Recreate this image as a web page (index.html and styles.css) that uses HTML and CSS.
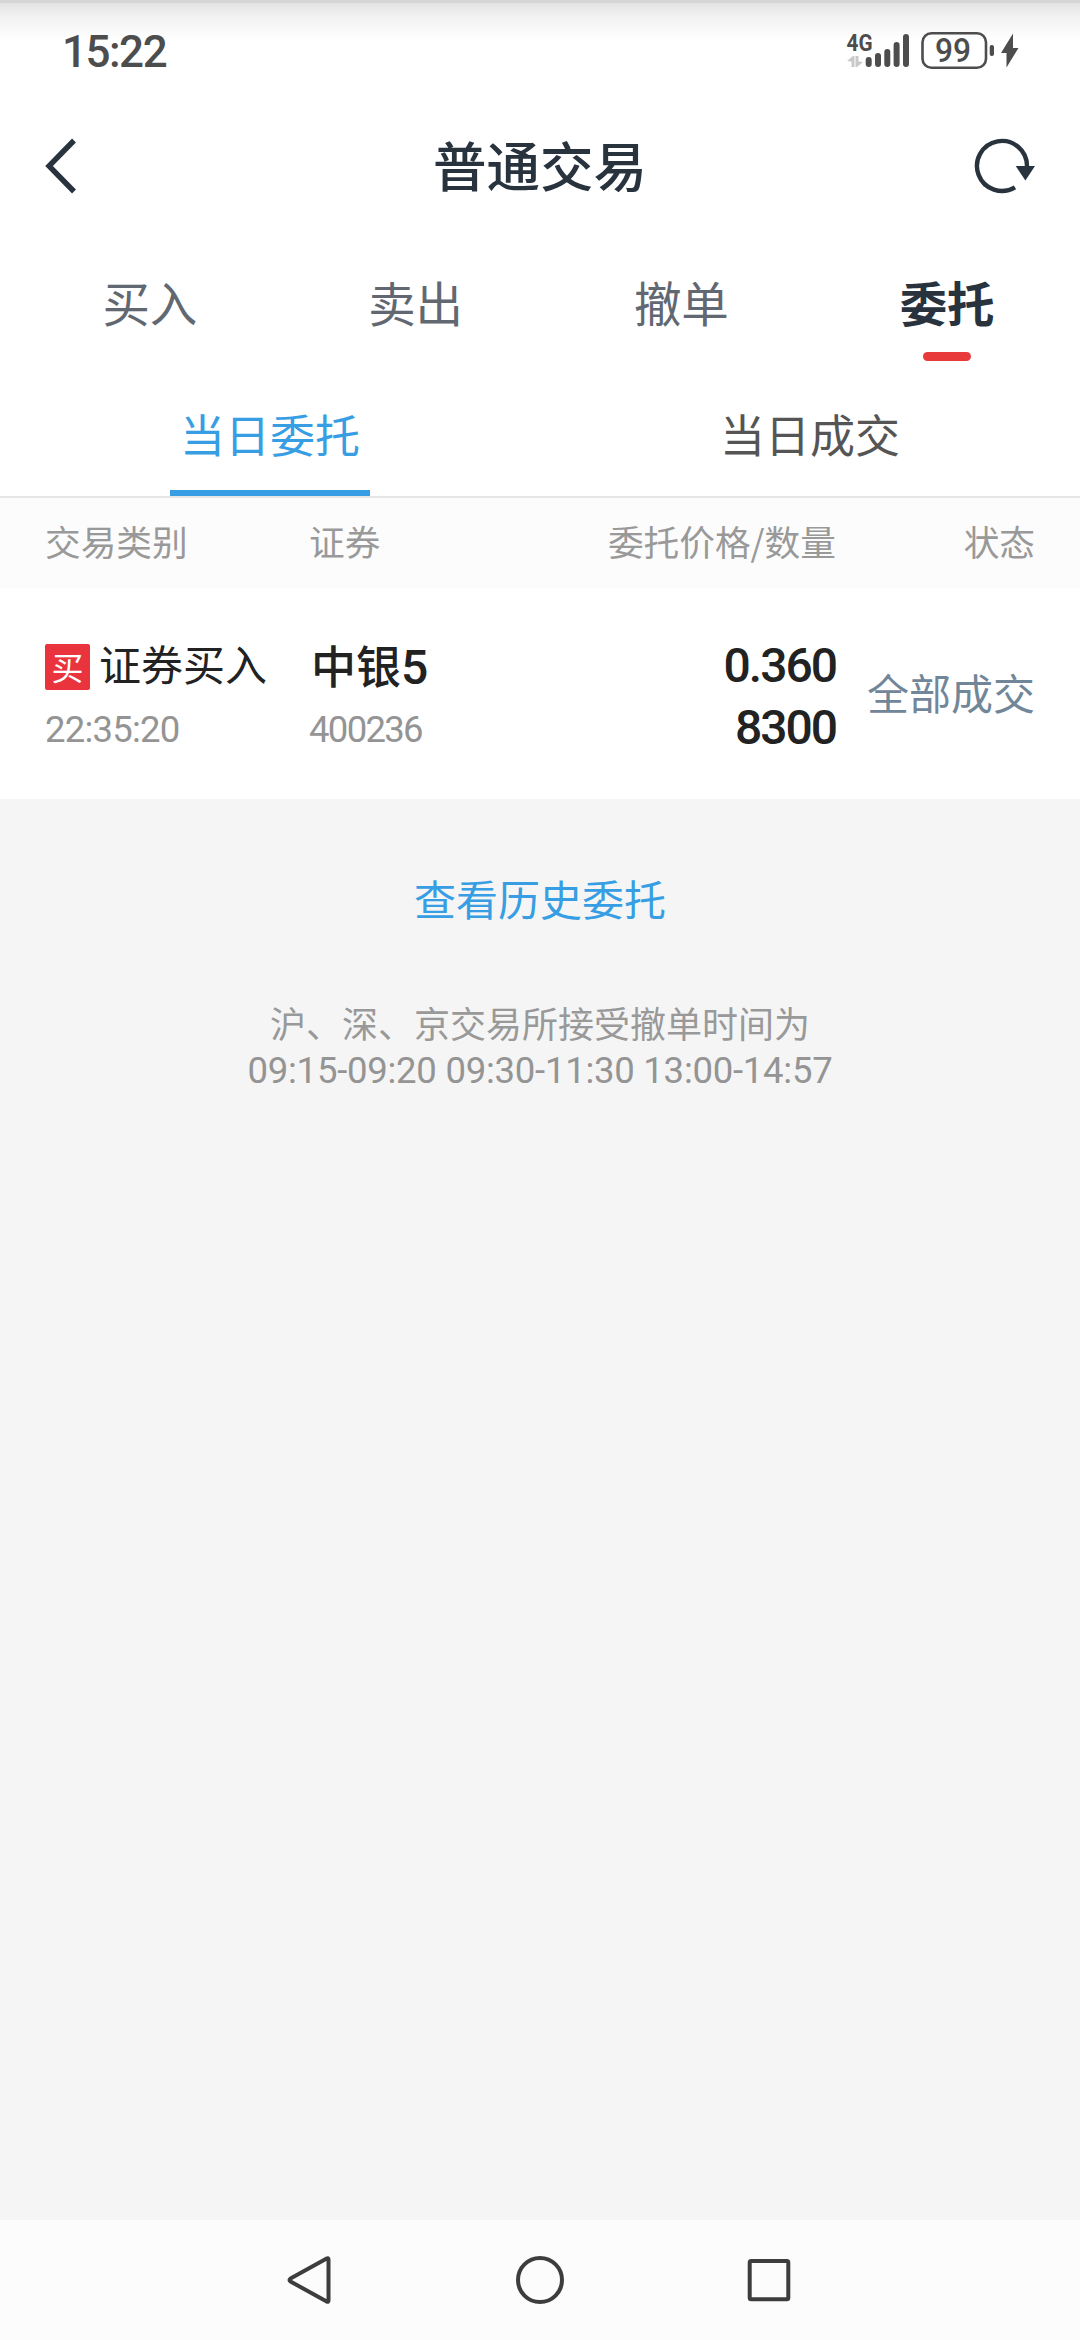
FILE: index.html
```html
<!DOCTYPE html>
<html lang="zh-CN">
<head>
<meta charset="utf-8">
<title>普通交易</title>
<link rel="stylesheet" href="styles.css">
</head>
<body>
<div class="screen">
  <div class="status">
    <span class="clock">15:22</span>
    <svg class="indicators" width="180" height="48" viewBox="844 26 180 48">
      <text class="net" x="846.500" y="51" textLength="26" lengthAdjust="spacingAndGlyphs">4G</text>
      <g fill="#c9c9c9">
        <path d="M847 61l6-5h1.500v11h-3v-5.500zM863 62l-6 5h-1.500V56h3v5.500z"/>
      </g>
      <g stroke="#4d4d4d" stroke-width="6" stroke-linecap="round">
        <path d="M868.700 60v4M878 56v8M887.300 52v12M896.600 45v19M906 37v27"/>
      </g>
      <rect x="922.500" y="33.200" width="63.500" height="34.600" rx="9" fill="none" stroke="#4d4d4d" stroke-width="2.600"/>
      <text class="level" x="935" y="62" textLength="36" lengthAdjust="spacingAndGlyphs">99</text>
      <rect x="989.700" y="45" width="4.300" height="11" rx="2" fill="#4d4d4d"/>
      <path d="M1013 33.500 1001 53h5.500v14.500L1018.500 48h-5.500z" fill="#4d4d4d"/>
    </svg>
  </div>
  <header class="titlebar">
    <svg class="back" width="40" height="60" viewBox="0 0 40 60"><path d="M30 4.500 5 30 30 55.500" fill="none" stroke="#28333e" stroke-width="5.400" stroke-linejoin="miter"/></svg>
    <h1 class="title">普通交易</h1>
    <svg class="reload" width="64" height="60" viewBox="972 136 64 60"><path d="M1027 166A25 25 0 1 0 1015 187.300" fill="none" stroke="#28333e" stroke-width="4.400"/><path d="M1015.700 166h19.300l-9.600 14.500z" fill="#28333e"/></svg>
  </header>
  <nav class="tabs">
    <span class="tab">买入</span>
    <span class="tab">卖出</span>
    <span class="tab">撤单</span>
    <span class="tab tab-on">委托</span>
  </nav>
  <nav class="subtabs">
    <span class="subtab"><span class="label label-on">当日委托</span></span>
    <span class="subtab"><span class="label">当日成交</span></span>
  </nav>
  <div class="grid head">
    <span>交易类别</span>
    <span>证券</span>
    <span class="end">委托价格/数量</span>
    <span class="end">状态</span>
  </div>
  <div class="grid order">
    <div class="col">
      <div class="kind"><span class="badge">买</span><span>证券买入</span></div>
      <div class="sub">22:35:20</div>
    </div>
    <div class="col">
      <div class="name">中银<span class="num">5</span></div>
      <div class="sub code">400236</div>
    </div>
    <div class="col amounts">
      <div class="price">0.360</div>
      <div class="qty">8300</div>
    </div>
    <div class="state">全部成交</div>
  </div>
  <main class="rest">
    <a class="history">查看历史委托</a>
    <p class="note">沪、深、京交易所接受撤单时间为</p>
    <p class="hours">09:15-09:20 09:30-11:30 13:00-14:57</p>
  </main>
  <footer class="navbar">
    <svg width="60" height="60" viewBox="0 0 60 60"><path d="M47.500 9.500v41q0 2-1.800 1L9.500 31.500q-2-1.500 0-3L45.700 8.500Q47.500 7.500 47.500 9.500z"/></svg>
    <svg width="60" height="60" viewBox="0 0 60 60"><circle cx="30" cy="30" r="22"/></svg>
    <svg width="60" height="60" viewBox="0 0 60 60"><rect x="10.700" y="11" width="38.600" height="38.200" rx="1.500"/></svg>
  </footer>
</div>
</body>
</html>
```

FILE: styles.css
```css
* { box-sizing: border-box; }
body, h1, p { margin: 0; }
body {
  background: #fff;
  font-family: "Noto Sans CJK SC", sans-serif;
  color: #222;
}
.screen { width: 1080px; height: 2340px; display: flex; flex-direction: column; }

.status {
  height: 112px;
  padding: 26px 56px 0 62px;
  display: flex;
  justify-content: space-between;
  background: linear-gradient(#d5d5d5 0 3px, #e3e3e3 3px, #f1f1f1 16px, #fff 40px);
}
.clock { font: 500 44px/52px Roboto, sans-serif; color: #4d4d4d; letter-spacing: -1.5px; }
.indicators { display: block; }
.net { font: 700 24px Roboto, sans-serif; fill: #4d4d4d; }
.level { font: 500 33px Roboto, sans-serif; fill: #4d4d4d; }

.titlebar {
  height: 108px;
  padding: 0 44px;
  display: grid;
  grid-template-columns: 64px 1fr 64px;
  align-items: center;
}
.titlebar svg { display: block; }
.title { font-size: 53.500px; line-height: 80px; padding-bottom: 5px; font-weight: 500; text-align: center; color: #28333e; }

.tabs { height: 150px; padding-left: 17px; display: grid; grid-template-columns: repeat(4, 1fr); }
.tab {
  display: flex;
  flex-direction: column;
  align-items: center;
  padding-top: 47px;
  font-size: 47.500px;
  line-height: 70px;
  color: #626872;
}
.tab-on { font-weight: 700; color: #28333e; }
.tab-on::after { content: ""; width: 48px; height: 9px; margin-top: 15px; border-radius: 5px; background: #e93a3b; }

.subtabs { height: 128px; display: grid; grid-template-columns: 1fr 1fr; border-bottom: 2px solid #e5e6e8; }
.subtab { display: flex; justify-content: center; }
.label { width: 200px; padding-top: 32px; font-size: 45px; line-height: 64px; text-align: center; color: #555; }
.label-on { color: #379ee3; border-bottom: 6px solid #379ee3; }

.grid { display: grid; grid-template-columns: 264px 240px 287px 199px; padding: 0 45px; }
.head { height: 90px; background: #fcfcfc; font-size: 35.700px; line-height: 86px; color: #999; }
.end { text-align: right; }

.order { height: 211px; padding-top: 42px; background: #fff; }
.kind { height: 68px; display: flex; align-items: flex-start; gap: 9px; font-size: 42px; line-height: 65px; }
.badge { width: 45px; height: 46px; margin-top: 14px; border-radius: 2px; background: #e9343d; color: #fff; font-size: 32px; line-height: 44px; text-align: center; }
.sub { font: 400 36.500px/44px Roboto, sans-serif; color: #949494; padding-top: 10px; letter-spacing: -0.8px; }
.code { letter-spacing: -1.7px; }
.name { height: 68px; padding-left: 2px; font-size: 45px; line-height: 70px; font-weight: 500; white-space: nowrap; }
.num, .price, .qty { font-family: Roboto, sans-serif; font-weight: 500; font-size: 48px; }
.amounts { text-align: right; letter-spacing: -2px; }
.price, .qty { line-height: 62px; }
.price { padding-top: 5px; }
.state { font-size: 42px; line-height: 124px; text-align: right; color: #728699; }

.rest { flex: 1; background: #f5f5f5; text-align: center; color: #999; }
.history { display: block; padding-top: 66px; font-size: 42px; line-height: 66px; color: #379ee3; }
.note { padding-top: 66px; font-size: 36px; line-height: 50px; }
.hours { padding-top: 2px; font: 400 36.500px/44px Roboto, sans-serif; letter-spacing: -0.25px; color: #949494; }

.navbar { height: 120px; padding: 30px 281px 0; display: flex; justify-content: space-between; background: #fcfcfc; }
.navbar svg { fill: none; stroke: #3d3d3d; stroke-width: 4; stroke-linejoin: round; }
```
